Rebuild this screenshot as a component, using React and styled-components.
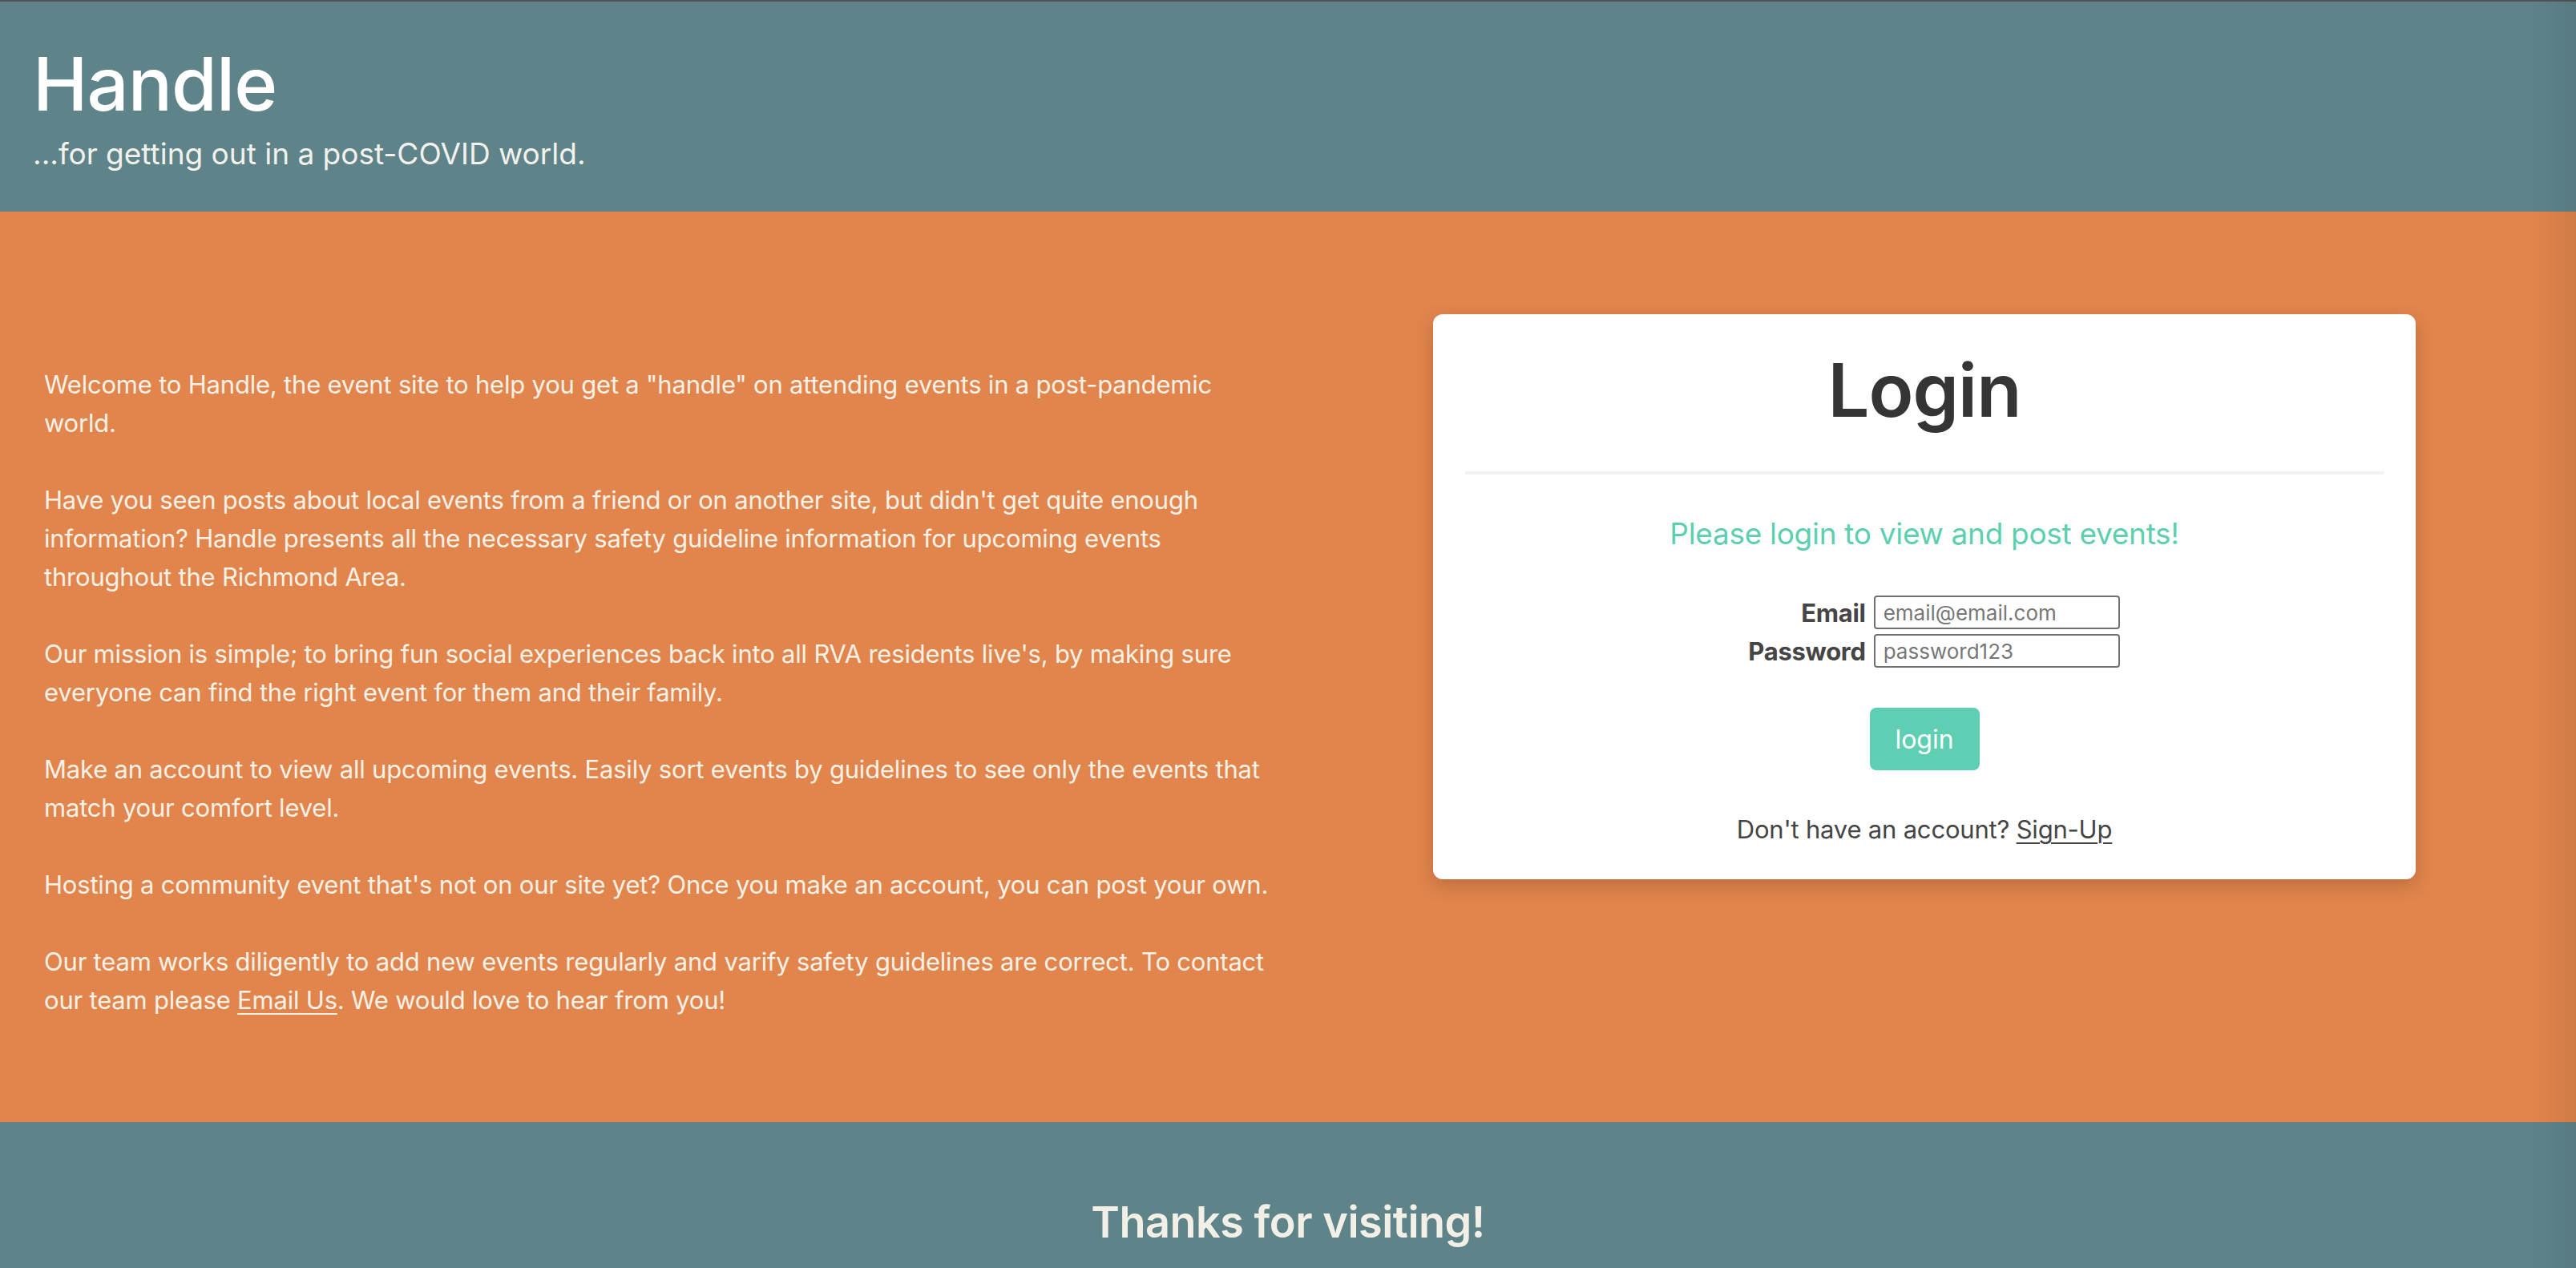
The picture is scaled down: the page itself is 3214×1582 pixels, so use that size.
import React from "react";
import styled, { createGlobalStyle } from "styled-components";

const GlobalStyle = createGlobalStyle`
  html, body {
    margin: 0;
    padding: 0;
    background: #5e848a;
  }
  body {
    font-family: Inter, "Noto Sans", "Liberation Sans", sans-serif;
    -webkit-font-smoothing: antialiased;
  }
  * { box-sizing: border-box; }
`;

const Page = styled.div`
  min-height: 1582px;
  display: flex;
  flex-direction: column;
  position: relative;
  &::after {
    content: "";
    position: fixed;
    top: 0;
    right: 0;
    width: 56px;
    height: 100%;
    pointer-events: none;
    background: linear-gradient(to right, rgba(0, 0, 0, 0), rgba(0, 0, 0, 0.07));
  }
`;

const Header = styled.header`
  background: #5e848a;
  border-top: 2px solid #545454;
  padding: 48px 41px 48px;
  display: flex;
  flex-direction: column;
  gap: 8px;
`;

const Brand = styled.h1`
  margin: 0;
  font-size: 92px;
  line-height: 110px;
  font-weight: 500;
  color: #ffffff;
  letter-spacing: -1px;
`;

const Tagline = styled.p`
  margin: 0;
  font-size: 37px;
  line-height: 48px;
  color: #f3f1ec;
  letter-spacing: 0;
`;

const Main = styled.main`
  background: #e1854d;
  padding: 128px 0 128px 55px;
  display: grid;
  grid-template-columns: 1540px 1226px;
  column-gap: 193px;
  align-items: start;
`;

const Intro = styled.section`
  padding-top: 64px;
  display: flex;
  flex-direction: column;
  gap: 48px;
`;

const Para = styled.p`
  margin: 0;
  font-size: 31px;
  line-height: 48px;
  color: #f6f1e7;
  letter-spacing: -0.2px;
`;

const TextLink = styled.a`
  color: inherit;
  text-decoration: underline;
  text-underline-offset: 5px;
  text-decoration-thickness: 2px;
`;

const Card = styled.section`
  background: #ffffff;
  border-radius: 12px;
  box-shadow: 0 8px 22px rgba(80, 40, 10, 0.25);
  padding: 40px 40px 38px;
  display: flex;
  flex-direction: column;
  align-items: center;
  color: #333;
`;

const CardTitle = styled.h2`
  margin: 0;
  font-size: 92px;
  line-height: 110px;
  font-weight: 600;
  color: #353535;
  letter-spacing: -1px;
`;

const Rule = styled.hr`
  align-self: stretch;
  margin: 46px 0 45px;
  border: 0;
  height: 4px;
  background: #f2f2f2;
`;

const Prompt = styled.p`
  margin: 0;
  font-size: 37px;
  line-height: 57px;
  color: #5ccfb0;
  letter-spacing: -0.3px;
`;

const Form = styled.form`
  margin-top: 49px;
  display: flex;
  flex-direction: column;
  align-items: center;
`;

const Fields = styled.div`
  display: grid;
  grid-template-columns: auto 307px;
  column-gap: 10px;
  row-gap: 6px;
  align-items: center;
  margin-left: 24px;
`;

const Label = styled.label`
  text-align: right;
  font-size: 31px;
  font-weight: 700;
  color: #454545;
  letter-spacing: -0.3px;
`;

const Input = styled.input`
  width: 307px;
  height: 42px;
  border: 2px solid #707070;
  border-radius: 4px;
  padding: 0 10px;
  font-family: inherit;
  font-size: 26px;
  color: #333;
  background: #fff;
  outline: none;
  &::placeholder {
    color: #777;
  }
`;

const Button = styled.button`
  margin-top: 50px;
  width: 137px;
  height: 78px;
  border: 0;
  border-radius: 8px;
  background: #5fcfb3;
  color: #ffffff;
  font-family: inherit;
  font-size: 32px;
  cursor: pointer;
`;

const SignUp = styled.p`
  margin: 50px 0 0;
  font-size: 31px;
  line-height: 48px;
  color: #454545;
  letter-spacing: -0.2px;
`;

const Footer = styled.footer`
  flex: 1;
  background: #5e848a;
  padding: 92px 0 80px;
  display: flex;
  justify-content: center;
`;

const Thanks = styled.h3`
  margin: 0;
  font-size: 54px;
  line-height: 66px;
  font-weight: 600;
  color: #f2efe7;
  letter-spacing: -0.5px;
`;

export default function App() {
  return (
    <Page>
      <GlobalStyle />
      <Header>
        <Brand>Handle</Brand>
        <Tagline>...for getting out in a post-COVID world.</Tagline>
      </Header>
      <Main>
        <Intro>
          <Para>
            Welcome to Handle, the event site to help you get a "handle" on attending events in a post-pandemic world.
          </Para>
          <Para>
            Have you seen posts about local events from a friend or on another site, but didn't get quite enough
            information? Handle presents all the necessary safety guideline information for upcoming events throughout
            the Richmond Area.
          </Para>
          <Para>
            Our mission is simple; to bring fun social experiences back into all RVA residents live's, by making sure
            everyone can find the right event for them and their family.
          </Para>
          <Para>
            Make an account to view all upcoming events. Easily sort events by guidelines to see only the events that
            match your comfort level.
          </Para>
          <Para>
            Hosting a community event that's not on our site yet? Once you make an account, you can post your own.
          </Para>
          <Para>
            Our team works diligently to add new events regularly and varify safety guidelines are correct. To contact
            our team please <TextLink href="#">Email Us</TextLink>. We would love to hear from you!
          </Para>
        </Intro>
        <Card>
          <CardTitle>Login</CardTitle>
          <Rule />
          <Prompt>Please login to view and post events!</Prompt>
          <Form onSubmit={(e) => e.preventDefault()}>
            <Fields>
              <Label htmlFor="email">Email</Label>
              <Input id="email" type="email" placeholder="email@email.com" />
              <Label htmlFor="password">Password</Label>
              <Input id="password" type="password" placeholder="password123" />
            </Fields>
            <Button type="submit">login</Button>
          </Form>
          <SignUp>
            Don't have an account? <TextLink href="#">Sign-Up</TextLink>
          </SignUp>
        </Card>
      </Main>
      <Footer>
        <Thanks>Thanks for visiting!</Thanks>
      </Footer>
    </Page>
  );
}
